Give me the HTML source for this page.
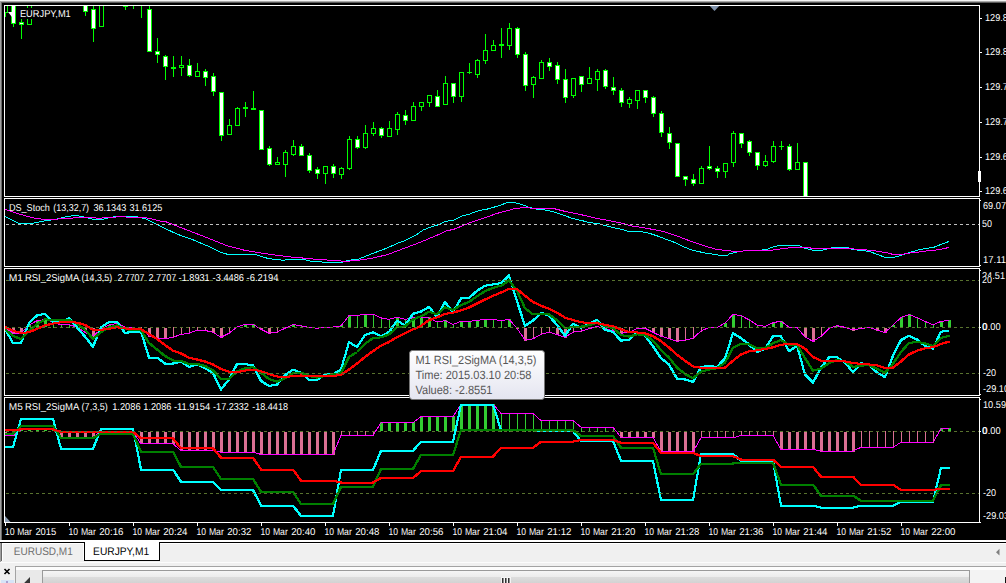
<!DOCTYPE html>
<html><head><meta charset="utf-8"><title>EURJPY,M1</title>
<style>
html,body{margin:0;padding:0;background:#000;overflow:hidden}
body{width:1006px;height:583px}
svg{display:block;font-family:"Liberation Sans",sans-serif}
text{white-space:pre;text-rendering:geometricPrecision}
</style></head><body>
<svg width="1006" height="583" viewBox="0 0 1006 583">
<rect x="0" y="0" width="1006" height="583" fill="#000"/>
<rect x="0" y="0" width="1006" height="1" fill="#f3f3f3"/>
<rect x="0" y="1" width="1006" height="1" fill="#a8a8a8"/>
<rect x="0" y="2" width="1006" height="1" fill="#5a5a5a"/>
<rect x="0" y="1" width="1" height="540" fill="#a0a0a0"/>
<rect x="1" y="2" width="1" height="538" fill="#696969"/>
<rect x="4" y="5" width="976" height="1" fill="#fff"/>
<rect x="4" y="5" width="1" height="192" fill="#fff"/>
<rect x="979" y="5" width="1" height="192" fill="#fff"/>
<rect x="4" y="196" width="976" height="1" fill="#fff"/>
<rect x="4" y="198" width="976" height="1" fill="#fff"/>
<rect x="4" y="198" width="1" height="69" fill="#fff"/>
<rect x="979" y="198" width="1" height="69" fill="#fff"/>
<rect x="4" y="266" width="976" height="1" fill="#fff"/>
<rect x="4" y="268" width="976" height="1" fill="#fff"/>
<rect x="4" y="268" width="1" height="128" fill="#fff"/>
<rect x="979" y="268" width="1" height="128" fill="#fff"/>
<rect x="4" y="395" width="976" height="1" fill="#fff"/>
<rect x="4" y="397" width="976" height="1" fill="#fff"/>
<rect x="4" y="397" width="1" height="126" fill="#fff"/>
<rect x="979" y="397" width="1" height="126" fill="#fff"/>
<rect x="4" y="522" width="977" height="1" fill="#fff"/>
<rect x="980" y="200" width="1" height="1" fill="#fff"/>
<rect x="980" y="270" width="1" height="1" fill="#fff"/>
<rect x="980" y="399" width="1" height="1" fill="#fff"/>
<rect x="980" y="265" width="1" height="1" fill="#fff"/>
<rect x="980" y="394" width="1" height="1" fill="#fff"/>
<g shape-rendering="crispEdges">
<rect x="7" y="6" width="1" height="7" fill="#00ff00"/>
<rect x="5" y="12" width="3" height="1" fill="#00ff00"/>
<rect x="5" y="12" width="1" height="5" fill="#00ff00"/>
<rect x="13" y="6" width="1" height="21" fill="#00ff00"/>
<rect x="11" y="6" width="5" height="18" fill="#00ff00"/>
<rect x="12" y="6" width="3" height="17" fill="#fff"/>
<rect x="21" y="19" width="1" height="20" fill="#00ff00"/>
<rect x="19" y="22" width="5" height="3" fill="#00ff00"/>
<rect x="20" y="23" width="3" height="1" fill="#fff"/>
<rect x="29" y="6" width="1" height="19" fill="#00ff00"/>
<rect x="27" y="6" width="5" height="19" fill="#00ff00"/>
<rect x="28" y="6" width="3" height="18" fill="#000"/>
<rect x="85" y="6" width="1" height="10" fill="#00ff00"/>
<rect x="83" y="6" width="5" height="6" fill="#00ff00"/>
<rect x="84" y="6" width="3" height="5" fill="#fff"/>
<rect x="93" y="6" width="1" height="36" fill="#00ff00"/>
<rect x="91" y="9" width="5" height="20" fill="#00ff00"/>
<rect x="92" y="10" width="3" height="18" fill="#fff"/>
<rect x="101" y="6" width="1" height="21" fill="#00ff00"/>
<rect x="99" y="6" width="5" height="21" fill="#00ff00"/>
<rect x="100" y="6" width="3" height="20" fill="#000"/>
<rect x="125" y="6" width="1" height="4" fill="#00ff00"/>
<rect x="123" y="6" width="5" height="1" fill="#00ff00"/>
<rect x="133" y="6" width="1" height="3" fill="#00ff00"/>
<rect x="141" y="6" width="1" height="12" fill="#00ff00"/>
<rect x="149" y="6" width="1" height="46" fill="#00ff00"/>
<rect x="147" y="9" width="5" height="43" fill="#00ff00"/>
<rect x="148" y="10" width="3" height="41" fill="#fff"/>
<rect x="157" y="38" width="1" height="25" fill="#00ff00"/>
<rect x="155" y="51" width="5" height="4" fill="#00ff00"/>
<rect x="156" y="52" width="3" height="2" fill="#fff"/>
<rect x="165" y="55" width="1" height="25" fill="#00ff00"/>
<rect x="163" y="56" width="5" height="11" fill="#00ff00"/>
<rect x="164" y="57" width="3" height="9" fill="#fff"/>
<rect x="173" y="56" width="1" height="21" fill="#00ff00"/>
<rect x="171" y="67" width="5" height="2" fill="#00ff00"/>
<rect x="181" y="56" width="1" height="20" fill="#00ff00"/>
<rect x="179" y="65" width="5" height="3" fill="#00ff00"/>
<rect x="180" y="66" width="3" height="1" fill="#000"/>
<rect x="189" y="59" width="1" height="18" fill="#00ff00"/>
<rect x="187" y="65" width="5" height="11" fill="#00ff00"/>
<rect x="188" y="66" width="3" height="9" fill="#fff"/>
<rect x="197" y="63" width="1" height="14" fill="#00ff00"/>
<rect x="195" y="71" width="5" height="6" fill="#00ff00"/>
<rect x="196" y="72" width="3" height="4" fill="#000"/>
<rect x="205" y="69" width="1" height="17" fill="#00ff00"/>
<rect x="203" y="71" width="5" height="7" fill="#00ff00"/>
<rect x="204" y="72" width="3" height="5" fill="#fff"/>
<rect x="213" y="73" width="1" height="23" fill="#00ff00"/>
<rect x="211" y="76" width="5" height="16" fill="#00ff00"/>
<rect x="212" y="77" width="3" height="14" fill="#fff"/>
<rect x="221" y="92" width="1" height="49" fill="#00ff00"/>
<rect x="219" y="92" width="5" height="44" fill="#00ff00"/>
<rect x="220" y="93" width="3" height="42" fill="#fff"/>
<rect x="229" y="119" width="1" height="16" fill="#00ff00"/>
<rect x="227" y="125" width="5" height="10" fill="#00ff00"/>
<rect x="228" y="126" width="3" height="8" fill="#000"/>
<rect x="237" y="107" width="1" height="19" fill="#00ff00"/>
<rect x="235" y="108" width="5" height="18" fill="#00ff00"/>
<rect x="236" y="109" width="3" height="16" fill="#000"/>
<rect x="245" y="102" width="1" height="15" fill="#00ff00"/>
<rect x="243" y="107" width="5" height="2" fill="#00ff00"/>
<rect x="253" y="91" width="1" height="19" fill="#00ff00"/>
<rect x="251" y="108" width="5" height="2" fill="#00ff00"/>
<rect x="261" y="110" width="1" height="40" fill="#00ff00"/>
<rect x="259" y="110" width="5" height="40" fill="#00ff00"/>
<rect x="260" y="111" width="3" height="38" fill="#fff"/>
<rect x="269" y="146" width="1" height="20" fill="#00ff00"/>
<rect x="267" y="148" width="5" height="17" fill="#00ff00"/>
<rect x="268" y="149" width="3" height="15" fill="#fff"/>
<rect x="277" y="157" width="1" height="8" fill="#00ff00"/>
<rect x="275" y="162" width="5" height="3" fill="#00ff00"/>
<rect x="276" y="163" width="3" height="1" fill="#000"/>
<rect x="285" y="150" width="1" height="27" fill="#00ff00"/>
<rect x="283" y="152" width="5" height="13" fill="#00ff00"/>
<rect x="284" y="153" width="3" height="11" fill="#000"/>
<rect x="293" y="140" width="1" height="16" fill="#00ff00"/>
<rect x="291" y="146" width="5" height="9" fill="#00ff00"/>
<rect x="292" y="147" width="3" height="7" fill="#000"/>
<rect x="301" y="144" width="1" height="12" fill="#00ff00"/>
<rect x="299" y="146" width="5" height="10" fill="#00ff00"/>
<rect x="300" y="147" width="3" height="8" fill="#fff"/>
<rect x="309" y="153" width="1" height="20" fill="#00ff00"/>
<rect x="307" y="155" width="5" height="16" fill="#00ff00"/>
<rect x="308" y="156" width="3" height="14" fill="#fff"/>
<rect x="317" y="167" width="1" height="12" fill="#00ff00"/>
<rect x="315" y="169" width="5" height="5" fill="#00ff00"/>
<rect x="316" y="170" width="3" height="3" fill="#fff"/>
<rect x="325" y="166" width="1" height="18" fill="#00ff00"/>
<rect x="323" y="166" width="5" height="8" fill="#00ff00"/>
<rect x="324" y="167" width="3" height="6" fill="#000"/>
<rect x="333" y="164" width="1" height="14" fill="#00ff00"/>
<rect x="331" y="166" width="5" height="8" fill="#00ff00"/>
<rect x="332" y="167" width="3" height="6" fill="#fff"/>
<rect x="341" y="167" width="1" height="12" fill="#00ff00"/>
<rect x="339" y="168" width="5" height="7" fill="#00ff00"/>
<rect x="340" y="169" width="3" height="5" fill="#000"/>
<rect x="349" y="136" width="1" height="34" fill="#00ff00"/>
<rect x="347" y="139" width="5" height="30" fill="#00ff00"/>
<rect x="348" y="140" width="3" height="28" fill="#000"/>
<rect x="357" y="136" width="1" height="13" fill="#00ff00"/>
<rect x="355" y="139" width="5" height="9" fill="#00ff00"/>
<rect x="356" y="140" width="3" height="7" fill="#fff"/>
<rect x="365" y="125" width="1" height="24" fill="#00ff00"/>
<rect x="363" y="133" width="5" height="15" fill="#00ff00"/>
<rect x="364" y="134" width="3" height="13" fill="#000"/>
<rect x="373" y="122" width="1" height="14" fill="#00ff00"/>
<rect x="371" y="128" width="5" height="6" fill="#00ff00"/>
<rect x="372" y="129" width="3" height="4" fill="#000"/>
<rect x="381" y="127" width="1" height="11" fill="#00ff00"/>
<rect x="379" y="128" width="5" height="8" fill="#00ff00"/>
<rect x="380" y="129" width="3" height="6" fill="#fff"/>
<rect x="389" y="121" width="1" height="16" fill="#00ff00"/>
<rect x="387" y="128" width="5" height="9" fill="#00ff00"/>
<rect x="388" y="129" width="3" height="7" fill="#000"/>
<rect x="397" y="112" width="1" height="23" fill="#00ff00"/>
<rect x="395" y="114" width="5" height="16" fill="#00ff00"/>
<rect x="396" y="115" width="3" height="14" fill="#000"/>
<rect x="405" y="110" width="1" height="15" fill="#00ff00"/>
<rect x="403" y="115" width="5" height="6" fill="#00ff00"/>
<rect x="404" y="116" width="3" height="4" fill="#fff"/>
<rect x="413" y="102" width="1" height="19" fill="#00ff00"/>
<rect x="411" y="106" width="5" height="15" fill="#00ff00"/>
<rect x="412" y="107" width="3" height="13" fill="#000"/>
<rect x="421" y="102" width="1" height="9" fill="#00ff00"/>
<rect x="419" y="102" width="5" height="5" fill="#00ff00"/>
<rect x="420" y="103" width="3" height="3" fill="#000"/>
<rect x="429" y="95" width="1" height="12" fill="#00ff00"/>
<rect x="427" y="95" width="5" height="8" fill="#00ff00"/>
<rect x="428" y="96" width="3" height="6" fill="#000"/>
<rect x="437" y="90" width="1" height="17" fill="#00ff00"/>
<rect x="435" y="96" width="5" height="11" fill="#00ff00"/>
<rect x="436" y="97" width="3" height="9" fill="#fff"/>
<rect x="445" y="76" width="1" height="29" fill="#00ff00"/>
<rect x="443" y="83" width="5" height="22" fill="#00ff00"/>
<rect x="444" y="84" width="3" height="20" fill="#000"/>
<rect x="453" y="83" width="1" height="20" fill="#00ff00"/>
<rect x="451" y="83" width="5" height="14" fill="#00ff00"/>
<rect x="452" y="84" width="3" height="12" fill="#fff"/>
<rect x="461" y="72" width="1" height="30" fill="#00ff00"/>
<rect x="459" y="72" width="5" height="25" fill="#00ff00"/>
<rect x="460" y="73" width="3" height="23" fill="#000"/>
<rect x="469" y="63" width="1" height="11" fill="#00ff00"/>
<rect x="467" y="72" width="5" height="1" fill="#00ff00"/>
<rect x="477" y="59" width="1" height="19" fill="#00ff00"/>
<rect x="475" y="60" width="5" height="15" fill="#00ff00"/>
<rect x="476" y="61" width="3" height="13" fill="#000"/>
<rect x="485" y="34" width="1" height="30" fill="#00ff00"/>
<rect x="483" y="50" width="5" height="11" fill="#00ff00"/>
<rect x="484" y="51" width="3" height="9" fill="#000"/>
<rect x="493" y="40" width="1" height="11" fill="#00ff00"/>
<rect x="491" y="45" width="5" height="6" fill="#00ff00"/>
<rect x="492" y="46" width="3" height="4" fill="#000"/>
<rect x="501" y="28" width="1" height="30" fill="#00ff00"/>
<rect x="499" y="44" width="5" height="2" fill="#00ff00"/>
<rect x="509" y="23" width="1" height="27" fill="#00ff00"/>
<rect x="507" y="28" width="5" height="18" fill="#00ff00"/>
<rect x="508" y="29" width="3" height="16" fill="#000"/>
<rect x="517" y="27" width="1" height="31" fill="#00ff00"/>
<rect x="515" y="28" width="5" height="27" fill="#00ff00"/>
<rect x="516" y="29" width="3" height="25" fill="#fff"/>
<rect x="525" y="52" width="1" height="39" fill="#00ff00"/>
<rect x="523" y="54" width="5" height="32" fill="#00ff00"/>
<rect x="524" y="55" width="3" height="30" fill="#fff"/>
<rect x="533" y="76" width="1" height="22" fill="#00ff00"/>
<rect x="531" y="77" width="5" height="8" fill="#00ff00"/>
<rect x="532" y="78" width="3" height="6" fill="#000"/>
<rect x="541" y="60" width="1" height="19" fill="#00ff00"/>
<rect x="539" y="62" width="5" height="17" fill="#00ff00"/>
<rect x="540" y="63" width="3" height="15" fill="#000"/>
<rect x="549" y="58" width="1" height="13" fill="#00ff00"/>
<rect x="547" y="62" width="5" height="5" fill="#00ff00"/>
<rect x="548" y="63" width="3" height="3" fill="#fff"/>
<rect x="557" y="62" width="1" height="22" fill="#00ff00"/>
<rect x="555" y="65" width="5" height="15" fill="#00ff00"/>
<rect x="556" y="66" width="3" height="13" fill="#fff"/>
<rect x="565" y="69" width="1" height="34" fill="#00ff00"/>
<rect x="563" y="79" width="5" height="19" fill="#00ff00"/>
<rect x="564" y="80" width="3" height="17" fill="#fff"/>
<rect x="573" y="78" width="1" height="20" fill="#00ff00"/>
<rect x="571" y="78" width="5" height="18" fill="#00ff00"/>
<rect x="572" y="79" width="3" height="16" fill="#000"/>
<rect x="581" y="76" width="1" height="16" fill="#00ff00"/>
<rect x="579" y="76" width="5" height="9" fill="#00ff00"/>
<rect x="580" y="77" width="3" height="7" fill="#fff"/>
<rect x="589" y="67" width="1" height="17" fill="#00ff00"/>
<rect x="587" y="78" width="5" height="6" fill="#00ff00"/>
<rect x="588" y="79" width="3" height="4" fill="#000"/>
<rect x="597" y="69" width="1" height="22" fill="#00ff00"/>
<rect x="595" y="71" width="5" height="9" fill="#00ff00"/>
<rect x="596" y="72" width="3" height="7" fill="#000"/>
<rect x="605" y="69" width="1" height="20" fill="#00ff00"/>
<rect x="603" y="70" width="5" height="17" fill="#00ff00"/>
<rect x="604" y="71" width="3" height="15" fill="#fff"/>
<rect x="613" y="77" width="1" height="18" fill="#00ff00"/>
<rect x="611" y="87" width="5" height="4" fill="#00ff00"/>
<rect x="612" y="88" width="3" height="2" fill="#fff"/>
<rect x="621" y="88" width="1" height="19" fill="#00ff00"/>
<rect x="619" y="90" width="5" height="13" fill="#00ff00"/>
<rect x="620" y="91" width="3" height="11" fill="#fff"/>
<rect x="629" y="97" width="1" height="11" fill="#00ff00"/>
<rect x="627" y="99" width="5" height="5" fill="#00ff00"/>
<rect x="628" y="100" width="3" height="3" fill="#000"/>
<rect x="637" y="90" width="1" height="19" fill="#00ff00"/>
<rect x="635" y="90" width="5" height="11" fill="#00ff00"/>
<rect x="636" y="91" width="3" height="9" fill="#000"/>
<rect x="645" y="90" width="1" height="13" fill="#00ff00"/>
<rect x="643" y="90" width="5" height="8" fill="#00ff00"/>
<rect x="644" y="91" width="3" height="6" fill="#fff"/>
<rect x="653" y="96" width="1" height="21" fill="#00ff00"/>
<rect x="651" y="97" width="5" height="17" fill="#00ff00"/>
<rect x="652" y="98" width="3" height="15" fill="#fff"/>
<rect x="661" y="111" width="1" height="26" fill="#00ff00"/>
<rect x="659" y="113" width="5" height="20" fill="#00ff00"/>
<rect x="660" y="114" width="3" height="18" fill="#fff"/>
<rect x="669" y="127" width="1" height="22" fill="#00ff00"/>
<rect x="667" y="133" width="5" height="10" fill="#00ff00"/>
<rect x="668" y="134" width="3" height="8" fill="#fff"/>
<rect x="677" y="143" width="1" height="34" fill="#00ff00"/>
<rect x="675" y="143" width="5" height="34" fill="#00ff00"/>
<rect x="676" y="144" width="3" height="32" fill="#fff"/>
<rect x="685" y="176" width="1" height="10" fill="#00ff00"/>
<rect x="683" y="176" width="5" height="4" fill="#00ff00"/>
<rect x="684" y="177" width="3" height="2" fill="#fff"/>
<rect x="693" y="174" width="1" height="12" fill="#00ff00"/>
<rect x="691" y="179" width="5" height="5" fill="#00ff00"/>
<rect x="692" y="180" width="3" height="3" fill="#fff"/>
<rect x="701" y="166" width="1" height="18" fill="#00ff00"/>
<rect x="699" y="168" width="5" height="16" fill="#00ff00"/>
<rect x="700" y="169" width="3" height="14" fill="#000"/>
<rect x="709" y="146" width="1" height="24" fill="#00ff00"/>
<rect x="707" y="166" width="5" height="3" fill="#00ff00"/>
<rect x="708" y="167" width="3" height="1" fill="#fff"/>
<rect x="717" y="166" width="1" height="12" fill="#00ff00"/>
<rect x="715" y="168" width="5" height="4" fill="#00ff00"/>
<rect x="716" y="169" width="3" height="2" fill="#fff"/>
<rect x="725" y="163" width="1" height="15" fill="#00ff00"/>
<rect x="723" y="163" width="5" height="9" fill="#00ff00"/>
<rect x="724" y="164" width="3" height="7" fill="#000"/>
<rect x="733" y="131" width="1" height="36" fill="#00ff00"/>
<rect x="731" y="133" width="5" height="30" fill="#00ff00"/>
<rect x="732" y="134" width="3" height="28" fill="#000"/>
<rect x="741" y="133" width="1" height="15" fill="#00ff00"/>
<rect x="739" y="133" width="5" height="11" fill="#00ff00"/>
<rect x="740" y="134" width="3" height="9" fill="#fff"/>
<rect x="749" y="140" width="1" height="16" fill="#00ff00"/>
<rect x="747" y="141" width="5" height="12" fill="#00ff00"/>
<rect x="748" y="142" width="3" height="10" fill="#fff"/>
<rect x="757" y="152" width="1" height="18" fill="#00ff00"/>
<rect x="755" y="152" width="5" height="14" fill="#00ff00"/>
<rect x="756" y="153" width="3" height="12" fill="#fff"/>
<rect x="765" y="155" width="1" height="12" fill="#00ff00"/>
<rect x="763" y="161" width="5" height="5" fill="#00ff00"/>
<rect x="764" y="162" width="3" height="3" fill="#000"/>
<rect x="773" y="141" width="1" height="22" fill="#00ff00"/>
<rect x="771" y="146" width="5" height="16" fill="#00ff00"/>
<rect x="772" y="147" width="3" height="14" fill="#000"/>
<rect x="781" y="141" width="1" height="9" fill="#00ff00"/>
<rect x="779" y="146" width="5" height="1" fill="#00ff00"/>
<rect x="789" y="144" width="1" height="27" fill="#00ff00"/>
<rect x="787" y="146" width="5" height="24" fill="#00ff00"/>
<rect x="788" y="147" width="3" height="22" fill="#fff"/>
<rect x="797" y="143" width="1" height="27" fill="#00ff00"/>
<rect x="795" y="162" width="5" height="8" fill="#00ff00"/>
<rect x="796" y="163" width="3" height="6" fill="#000"/>
<rect x="805" y="162" width="1" height="34" fill="#00ff00"/>
<rect x="803" y="162" width="5" height="34" fill="#00ff00"/>
<rect x="804" y="163" width="3" height="33" fill="#fff"/>
</g>
<rect x="18" y="8" width="55" height="11" fill="#000"/>
<path d="M8 12H12V17Z" fill="#fff"/>
<text y="17" font-size="10" fill="#fff"><tspan x="19.9" textLength="50.9" lengthAdjust="spacingAndGlyphs">EURJPY,M1</tspan></text>
<path d="M709.8 6H719.2L714.5 11Z" fill="#8092ab"/>
<path d="M5 516L10.5 522H5Z" fill="#8a9bb0"/>
<rect x="978" y="171" width="3" height="11" fill="#fff"/>
<rect x="980" y="18" width="2" height="1" fill="#fff"/>
<text x="985" y="21" font-size="10" fill="#fff" textLength="33" lengthAdjust="spacingAndGlyphs">129.850</text>
<rect x="980" y="52" width="2" height="1" fill="#fff"/>
<text x="985" y="55" font-size="10" fill="#fff" textLength="33" lengthAdjust="spacingAndGlyphs">129.800</text>
<rect x="980" y="87" width="2" height="1" fill="#fff"/>
<text x="985" y="90" font-size="10" fill="#fff" textLength="33" lengthAdjust="spacingAndGlyphs">129.750</text>
<rect x="980" y="122" width="2" height="1" fill="#fff"/>
<text x="985" y="125" font-size="10" fill="#fff" textLength="33" lengthAdjust="spacingAndGlyphs">129.700</text>
<rect x="980" y="157" width="2" height="1" fill="#fff"/>
<text x="985" y="160" font-size="10" fill="#fff" textLength="33" lengthAdjust="spacingAndGlyphs">129.650</text>
<rect x="980" y="191" width="2" height="1" fill="#fff"/>
<text x="985" y="194" font-size="10" fill="#fff" textLength="33" lengthAdjust="spacingAndGlyphs">129.600</text>
<defs><clipPath id="cp"><rect x="5" y="0" width="974" height="583"/></clipPath></defs>
<g shape-rendering="crispEdges" clip-path="url(#cp)">
<polyline points="5.0,216.4 13.0,220.5 20.0,223.8 31.0,223.8 36.0,222.5 44.0,221.0 52.0,219.8 58.0,218.8 66.0,216.8 73.0,215.6 76.8,215.5 83.5,216.9 93.5,219.4 102.0,219.4 113.5,216.9 137.0,216.9 145.0,218.5 157.0,224.4 160.0,226.0 176.7,234.0 193.4,240.0 210.0,247.0 221.8,252.8 228.5,254.5 255.0,254.5 268.5,258.6 283.6,260.3 290.0,259.1 302.0,259.1 310.0,261.1 320.0,261.6 323.0,262.3 341.7,262.3 348.4,260.3 358.4,259.1 370.0,254.5 386.8,248.1 396.8,243.6 406.8,239.8 415.0,235.6 423.5,229.9 432.0,226.6 438.6,224.7 445.0,221.4 453.6,220.2 462.0,216.0 470.0,213.9 478.6,210.7 488.0,208.9 496.7,206.4 508.4,202.3 513.4,202.3 521.7,204.4 530.0,207.7 538.5,209.4 546.8,210.2 555.0,212.2 563.5,215.2 571.8,218.2 583.5,221.0 590.0,222.7 598.6,223.6 605.0,225.6 613.6,227.7 622.0,229.4 628.6,231.4 640.0,231.5 648.4,233.0 656.7,235.7 665.0,238.9 673.4,241.9 681.8,246.0 690.0,249.4 698.5,251.6 706.8,253.3 715.0,254.5 721.8,255.6 726.8,255.6 730.0,253.6 737.0,252.0 745.0,250.6 757.0,250.6 767.0,249.4 772.0,247.3 780.0,245.3 785.3,245.6 792.0,246.0 795.3,245.3 798.6,245.3 803.6,247.8 806.7,248.6 813.4,250.3 821.7,250.3 826.7,249.1 833.4,247.4 847.6,247.4 851.8,249.4 865.0,250.8 870.0,251.6 875.0,253.6 880.0,255.3 885.0,257.5 893.5,257.5 900.0,255.6 908.6,252.8 917.0,250.3 925.3,248.6 933.6,247.4 938.6,245.3 943.6,243.6 949.0,241.4" stroke="#00ffff" stroke-width="1" fill="none" stroke-linejoin="round"/>
<polyline points="5.0,209.4 13.0,212.0 21.0,214.5 29.0,216.8 37.0,218.7 45.0,219.3 57.0,219.3 60.0,218.5 70.0,218.2 83.5,217.4 100.0,218.2 117.0,216.9 142.0,217.2 150.0,218.5 160.0,221.0 165.0,221.4 176.7,226.0 193.4,232.4 210.0,238.9 226.8,245.6 243.5,250.0 260.0,252.8 277.0,255.3 293.6,257.3 310.0,258.6 320.0,259.8 336.7,260.3 343.4,261.5 358.4,260.3 370.0,258.6 386.8,254.8 403.5,248.6 420.0,242.4 437.0,235.2 447.0,230.7 453.6,229.4 470.0,222.7 480.0,219.4 496.7,213.5 513.4,209.0 523.4,207.4 530.0,208.0 538.5,208.5 553.5,208.5 563.5,211.0 580.0,214.4 597.0,218.5 613.6,221.4 623.6,223.6 630.0,225.7 640.0,227.2 648.4,228.6 656.7,230.2 665.0,231.9 673.4,234.7 681.8,237.8 690.0,241.0 698.5,243.9 706.8,246.6 715.0,249.0 723.5,250.3 731.9,251.1 767.0,250.8 777.0,249.4 785.3,248.3 793.6,247.3 800.0,247.0 808.4,247.8 816.7,248.6 850.0,248.6 858.5,249.4 871.8,250.3 880.0,251.6 886.8,252.8 893.5,254.5 901.9,254.5 908.6,253.1 917.0,252.3 925.3,251.1 933.6,250.3 942.0,249.1 949.0,247.4" stroke="#ff00ff" stroke-width="1" fill="none" stroke-linejoin="round"/>
<path d="M5 224.5H979" stroke="#c0c0c0" stroke-width="1" stroke-dasharray="3 3" stroke-dashoffset="5" fill="none"/>
</g>
<text y="211" font-size="10" fill="#fff"><tspan x="8.9" textLength="41.0" lengthAdjust="spacingAndGlyphs">DS_Stoch</tspan> <tspan x="53.3" textLength="35.8" lengthAdjust="spacingAndGlyphs">(13,32,7)</tspan> <tspan x="93.4" textLength="32.9" lengthAdjust="spacingAndGlyphs">36.1343</tspan> <tspan x="129.4" textLength="32.9" lengthAdjust="spacingAndGlyphs">31.6125</tspan></text>
<text x="983" y="209" font-size="10" fill="#fff" textLength="23" lengthAdjust="spacingAndGlyphs">69.07</text>
<text x="982" y="227" font-size="10" fill="#fff" textLength="10" lengthAdjust="spacingAndGlyphs">50</text>
<text x="983" y="263" font-size="10" fill="#fff" textLength="23" lengthAdjust="spacingAndGlyphs">17.11</text>
<g shape-rendering="crispEdges" clip-path="url(#cp)">
<rect x="12" y="328" width="3" height="6" fill="#db7093"/>
<rect x="20" y="328" width="3" height="6" fill="#db7093"/>
<rect x="28" y="325" width="3" height="2" fill="#32cd32"/>
<rect x="36" y="320" width="3" height="7" fill="#32cd32"/>
<rect x="44" y="319" width="3" height="8" fill="#32cd32"/>
<rect x="53" y="322" width="1" height="6" fill="#32cd32"/>
<rect x="61" y="325" width="1" height="3" fill="#32cd32"/>
<rect x="69" y="324" width="1" height="4" fill="#32cd32"/>
<rect x="84" y="328" width="3" height="5" fill="#db7093"/>
<rect x="92" y="328" width="3" height="9" fill="#db7093"/>
<rect x="101" y="327" width="1" height="3" fill="#db7093"/>
<rect x="108" y="325" width="3" height="2" fill="#32cd32"/>
<rect x="116" y="323" width="3" height="4" fill="#32cd32"/>
<rect x="132" y="328" width="3" height="1" fill="#db7093"/>
<rect x="141" y="327" width="1" height="2" fill="#db7093"/>
<rect x="148" y="328" width="3" height="9" fill="#db7093"/>
<rect x="156" y="328" width="3" height="11" fill="#db7093"/>
<rect x="164" y="328" width="3" height="11" fill="#db7093"/>
<rect x="173" y="327" width="1" height="11" fill="#db7093"/>
<rect x="181" y="327" width="1" height="8" fill="#db7093"/>
<rect x="189" y="327" width="1" height="7" fill="#db7093"/>
<rect x="197" y="327" width="1" height="4" fill="#db7093"/>
<rect x="205" y="327" width="1" height="4" fill="#db7093"/>
<rect x="212" y="328" width="3" height="5" fill="#db7093"/>
<rect x="220" y="328" width="3" height="10" fill="#db7093"/>
<rect x="229" y="327" width="1" height="7" fill="#db7093"/>
<rect x="244" y="324" width="3" height="3" fill="#32cd32"/>
<rect x="252" y="324" width="3" height="3" fill="#32cd32"/>
<rect x="260" y="328" width="3" height="2" fill="#db7093"/>
<rect x="268" y="328" width="3" height="6" fill="#db7093"/>
<rect x="277" y="327" width="1" height="6" fill="#db7093"/>
<rect x="285" y="327" width="1" height="2" fill="#db7093"/>
<rect x="292" y="324" width="3" height="3" fill="#32cd32"/>
<rect x="301" y="325" width="1" height="3" fill="#32cd32"/>
<rect x="316" y="328" width="3" height="1" fill="#db7093"/>
<rect x="340" y="325" width="3" height="2" fill="#32cd32"/>
<rect x="348" y="315" width="3" height="12" fill="#32cd32"/>
<rect x="357" y="315" width="1" height="13" fill="#32cd32"/>
<rect x="364" y="314" width="3" height="13" fill="#32cd32"/>
<rect x="373" y="314" width="1" height="14" fill="#32cd32"/>
<rect x="381" y="317" width="1" height="11" fill="#32cd32"/>
<rect x="389" y="319" width="1" height="9" fill="#32cd32"/>
<rect x="396" y="317" width="3" height="10" fill="#32cd32"/>
<rect x="405" y="319" width="1" height="9" fill="#32cd32"/>
<rect x="412" y="317" width="3" height="10" fill="#32cd32"/>
<rect x="420" y="317" width="3" height="10" fill="#32cd32"/>
<rect x="428" y="317" width="3" height="10" fill="#32cd32"/>
<rect x="437" y="321" width="1" height="7" fill="#32cd32"/>
<rect x="444" y="320" width="3" height="7" fill="#32cd32"/>
<rect x="453" y="324" width="1" height="4" fill="#32cd32"/>
<rect x="460" y="321" width="3" height="6" fill="#32cd32"/>
<rect x="468" y="321" width="3" height="6" fill="#32cd32"/>
<rect x="476" y="320" width="3" height="7" fill="#32cd32"/>
<rect x="484" y="319" width="3" height="8" fill="#32cd32"/>
<rect x="493" y="319" width="1" height="9" fill="#32cd32"/>
<rect x="501" y="320" width="1" height="8" fill="#32cd32"/>
<rect x="508" y="319" width="3" height="8" fill="#32cd32"/>
<rect x="516" y="328" width="3" height="1" fill="#db7093"/>
<rect x="524" y="328" width="3" height="13" fill="#db7093"/>
<rect x="533" y="327" width="1" height="12" fill="#db7093"/>
<rect x="541" y="327" width="1" height="8" fill="#db7093"/>
<rect x="549" y="327" width="1" height="6" fill="#db7093"/>
<rect x="556" y="328" width="3" height="7" fill="#db7093"/>
<rect x="564" y="328" width="3" height="10" fill="#db7093"/>
<rect x="573" y="327" width="1" height="6" fill="#db7093"/>
<rect x="581" y="327" width="1" height="5" fill="#db7093"/>
<rect x="589" y="327" width="1" height="2" fill="#db7093"/>
<rect x="596" y="326" width="3" height="1" fill="#32cd32"/>
<rect x="604" y="328" width="3" height="1" fill="#db7093"/>
<rect x="612" y="328" width="3" height="3" fill="#db7093"/>
<rect x="620" y="328" width="3" height="6" fill="#db7093"/>
<rect x="629" y="327" width="1" height="6" fill="#db7093"/>
<rect x="637" y="327" width="1" height="2" fill="#db7093"/>
<rect x="645" y="327" width="1" height="2" fill="#db7093"/>
<rect x="652" y="328" width="3" height="5" fill="#db7093"/>
<rect x="660" y="328" width="3" height="9" fill="#db7093"/>
<rect x="668" y="328" width="3" height="11" fill="#db7093"/>
<rect x="676" y="328" width="3" height="14" fill="#db7093"/>
<rect x="685" y="327" width="1" height="14" fill="#db7093"/>
<rect x="693" y="327" width="1" height="12" fill="#db7093"/>
<rect x="701" y="327" width="1" height="5" fill="#db7093"/>
<rect x="724" y="323" width="3" height="4" fill="#32cd32"/>
<rect x="732" y="314" width="3" height="13" fill="#32cd32"/>
<rect x="741" y="315" width="1" height="13" fill="#32cd32"/>
<rect x="749" y="319" width="1" height="9" fill="#32cd32"/>
<rect x="757" y="325" width="1" height="3" fill="#32cd32"/>
<rect x="765" y="326" width="1" height="2" fill="#32cd32"/>
<rect x="772" y="322" width="3" height="5" fill="#32cd32"/>
<rect x="780" y="321" width="3" height="6" fill="#32cd32"/>
<rect x="804" y="328" width="3" height="9" fill="#db7093"/>
<rect x="812" y="328" width="3" height="14" fill="#db7093"/>
<rect x="821" y="327" width="1" height="10" fill="#db7093"/>
<rect x="829" y="327" width="1" height="2" fill="#db7093"/>
<rect x="836" y="325" width="3" height="2" fill="#32cd32"/>
<rect x="852" y="328" width="3" height="3" fill="#db7093"/>
<rect x="861" y="327" width="1" height="2" fill="#db7093"/>
<rect x="876" y="328" width="3" height="3" fill="#db7093"/>
<rect x="884" y="328" width="3" height="5" fill="#db7093"/>
<rect x="892" y="325" width="3" height="2" fill="#32cd32"/>
<rect x="900" y="317" width="3" height="10" fill="#32cd32"/>
<rect x="908" y="314" width="3" height="13" fill="#32cd32"/>
<rect x="917" y="317" width="1" height="11" fill="#32cd32"/>
<rect x="925" y="321" width="1" height="7" fill="#32cd32"/>
<rect x="933" y="325" width="1" height="3" fill="#32cd32"/>
<rect x="940" y="321" width="3" height="6" fill="#32cd32"/>
<rect x="948" y="320" width="3" height="7" fill="#32cd32"/>
<polyline points="5.0,327.5 13.0,333.0 21.0,333.4 29.0,325.0 37.0,320.7 45.0,319.5 53.0,322.0 61.0,325.0 69.0,324.7 77.0,327.0 85.0,332.3 93.0,336.0 101.0,329.2 109.0,325.0 117.0,323.5 125.0,327.0 133.0,328.0 141.0,328.3 149.0,336.3 157.0,338.2 165.0,338.6 173.0,337.3 181.0,334.4 189.0,333.2 197.0,330.4 205.0,330.4 213.0,332.3 221.0,337.3 229.0,333.3 237.0,327.0 245.0,324.3 253.0,324.3 261.0,329.3 269.0,333.3 277.0,332.0 285.0,328.3 293.0,324.5 301.0,325.8 309.0,327.3 317.0,328.3 325.0,327.0 333.0,327.0 341.0,325.8 349.0,315.6 357.0,315.6 365.0,314.1 373.0,314.1 381.0,317.9 389.0,319.4 397.0,317.1 405.0,319.4 413.0,317.9 421.0,317.9 429.0,317.9 437.0,321.9 445.0,320.7 453.0,324.4 461.0,321.4 469.0,321.4 477.0,320.5 485.0,319.2 493.0,319.2 501.0,320.7 509.0,319.2 517.0,328.2 525.0,340.1 533.0,338.9 541.0,334.3 549.0,332.2 557.0,334.5 565.0,337.3 573.0,332.2 581.0,331.0 589.0,328.8 597.0,326.3 605.0,328.8 613.0,330.7 621.0,333.2 629.0,332.5 637.0,328.5 645.0,328.2 653.0,332.3 661.0,336.1 669.0,338.6 677.0,341.3 685.0,340.1 693.0,338.2 701.0,331.0 709.0,327.5 717.0,327.5 725.0,323.1 733.0,314.4 741.0,315.6 749.0,319.8 757.0,325.0 765.0,326.3 773.0,322.8 781.0,321.0 789.0,327.3 797.0,327.5 805.0,336.9 813.0,341.3 821.0,336.3 829.0,328.5 837.0,325.7 845.0,327.3 853.0,330.0 861.0,328.5 869.0,327.5 877.0,330.0 885.0,332.5 893.0,325.0 901.0,317.5 909.0,314.6 917.0,317.6 925.0,321.3 933.0,325.0 941.0,321.3 949.0,320.4" stroke="#ff00ff" stroke-width="1" fill="none" stroke-linejoin="round"/>
<g stroke="#00ffff" stroke-width="1" fill="none"><polyline id="l1" points="5.0,328.8 13.0,343.0 21.0,343.0 29.0,323.0 37.0,315.4 45.0,313.9 53.0,321.7 61.0,321.7 69.0,318.3 77.0,327.3 85.0,336.7 93.0,346.7 101.0,327.3 109.0,322.0 117.0,322.0 125.0,333.0 133.0,331.7 141.0,331.7 149.0,357.6 157.0,357.6 165.0,363.5 173.0,363.5 181.0,361.5 189.0,367.0 197.0,364.5 205.0,368.0 213.0,373.0 221.0,389.3 229.0,379.6 237.0,364.0 245.0,364.2 253.0,365.2 261.0,380.9 269.0,385.9 277.0,384.6 285.0,375.2 293.0,369.6 301.0,372.7 309.0,379.9 317.0,379.9 325.0,374.4 333.0,374.4 341.0,369.5 349.0,342.2 357.0,347.0 365.0,335.0 373.0,332.3 381.0,336.3 389.0,332.0 397.0,320.7 405.0,325.3 413.0,313.8 421.0,311.5 429.0,306.9 437.0,316.9 445.0,301.9 453.0,312.5 461.0,298.5 469.0,297.9 477.0,290.8 485.0,285.7 493.0,284.4 501.0,283.2 509.0,275.6 517.0,301.3 525.0,325.7 533.0,320.7 541.0,312.8 549.0,315.7 557.0,325.1 565.0,335.8 573.0,323.9 581.0,327.8 589.0,323.8 597.0,319.8 605.0,330.0 613.0,331.9 621.0,340.7 629.0,339.8 637.0,332.3 645.0,335.7 653.0,346.3 661.0,358.2 669.0,364.5 677.0,378.6 685.0,379.5 693.0,382.0 701.0,367.3 709.0,365.7 717.0,367.0 725.0,358.2 733.0,333.2 741.0,338.2 749.0,344.4 757.0,352.0 765.0,348.8 773.0,336.3 781.0,336.3 789.0,351.3 797.0,345.7 805.0,374.5 813.0,382.6 821.0,367.6 829.0,357.3 837.0,357.3 845.0,362.6 853.0,372.2 861.0,363.2 869.0,365.1 877.0,372.6 885.0,377.0 893.0,355.7 901.0,340.0 909.0,335.9 917.0,339.5 925.0,345.8 933.0,348.8 941.0,331.6 949.0,331.0" transform="translate(-0.5 -0.5)"/><use href="#l1" x="1" y="0"/><use href="#l1" x="0" y="1"/><use href="#l1" x="1" y="1"/></g>
<g stroke="#008000" stroke-width="1" fill="none"><polyline id="l2" points="5.0,329.2 13.0,336.0 21.0,339.0 29.0,331.0 37.0,324.2 45.0,319.4 53.0,319.8 61.0,319.8 69.0,319.8 77.0,323.8 85.0,329.8 93.0,338.6 101.0,332.3 109.0,327.3 117.0,325.4 125.0,328.6 133.0,330.4 141.0,330.4 149.0,343.0 157.0,349.5 165.0,356.0 173.0,360.5 181.0,361.0 189.0,364.0 197.0,364.0 205.0,366.0 213.0,370.5 221.0,379.0 229.0,379.0 237.0,371.5 245.0,368.3 253.0,367.1 261.0,372.7 269.0,379.0 277.0,381.5 285.0,378.4 293.0,373.4 301.0,372.7 309.0,375.9 317.0,377.7 325.0,375.9 333.0,374.6 341.0,373.0 349.0,357.0 357.0,352.0 365.0,343.8 373.0,338.2 381.0,337.3 389.0,334.4 397.0,327.3 405.0,326.3 413.0,319.4 421.0,316.2 429.0,311.9 437.0,314.2 445.0,307.5 453.0,309.9 461.0,305.1 469.0,301.9 477.0,296.3 485.0,291.2 493.0,287.8 501.0,285.7 509.0,280.6 517.0,290.7 525.0,308.2 533.0,314.5 541.0,313.8 549.0,314.5 557.0,320.1 565.0,328.2 573.0,327.0 581.0,326.6 589.0,325.3 597.0,322.5 605.0,326.3 613.0,328.2 621.0,335.0 629.0,336.6 637.0,334.4 645.0,335.0 653.0,340.7 661.0,350.0 669.0,357.6 677.0,367.6 685.0,373.9 693.0,378.3 701.0,371.7 709.0,369.5 717.0,368.2 725.0,362.6 733.0,347.6 741.0,344.0 749.0,344.4 757.0,348.2 765.0,348.2 773.0,343.2 781.0,340.0 789.0,345.0 797.0,345.0 805.0,358.2 813.0,370.7 821.0,368.5 829.0,363.2 837.0,360.1 845.0,361.4 853.0,367.0 861.0,365.7 869.0,365.1 877.0,368.9 885.0,372.6 893.0,363.9 901.0,352.0 909.0,343.0 917.0,341.8 925.0,343.5 933.0,346.0 941.0,338.0 949.0,335.8" transform="translate(-0.5 -0.5)"/><use href="#l2" x="1" y="0"/><use href="#l2" x="0" y="1"/><use href="#l2" x="1" y="1"/></g>
<g stroke="#ff0000" stroke-width="1" fill="none"><polyline id="l3" points="5.0,327.0 13.0,330.8 21.0,333.0 29.0,332.3 37.0,328.8 45.0,325.4 53.0,323.6 61.0,322.3 69.0,322.0 77.0,322.6 85.0,325.0 93.0,329.6 101.0,329.8 109.0,328.8 117.0,327.3 125.0,328.3 133.0,329.4 141.0,329.4 149.0,334.0 157.0,339.0 165.0,345.0 173.0,350.7 181.0,353.5 189.0,357.6 197.0,359.5 205.0,361.5 213.0,364.5 221.0,369.0 229.0,371.7 237.0,372.1 245.0,370.6 253.0,369.6 261.0,371.2 269.0,374.0 277.0,376.5 285.0,376.9 293.0,376.2 301.0,375.5 309.0,375.9 317.0,376.5 325.0,376.2 333.0,375.9 341.0,375.0 349.0,369.5 357.0,363.6 365.0,357.0 373.0,351.1 381.0,345.7 389.0,342.0 397.0,337.2 405.0,333.2 413.0,329.4 421.0,325.8 429.0,320.2 437.0,317.4 445.0,313.8 453.0,312.7 461.0,310.3 469.0,307.5 477.0,303.5 485.0,299.5 493.0,295.9 501.0,292.5 509.0,289.0 517.0,289.0 525.0,295.7 533.0,302.0 541.0,305.7 549.0,308.8 557.0,312.6 565.0,317.6 573.0,320.1 581.0,322.2 589.0,323.2 597.0,323.2 605.0,324.8 613.0,326.3 621.0,329.4 629.0,331.9 637.0,332.5 645.0,333.2 653.0,336.3 661.0,341.1 669.0,347.6 677.0,354.8 685.0,360.7 693.0,366.4 701.0,367.8 709.0,367.9 717.0,367.9 725.0,367.6 733.0,360.7 741.0,354.5 749.0,351.3 757.0,350.3 765.0,349.0 773.0,347.3 781.0,344.8 789.0,344.0 797.0,344.0 805.0,348.6 813.0,357.0 821.0,360.7 829.0,361.0 837.0,361.0 845.0,361.4 853.0,362.9 861.0,363.9 869.0,364.5 877.0,365.4 885.0,367.9 893.0,367.6 901.0,361.4 909.0,354.4 917.0,350.7 925.0,348.3 933.0,347.1 941.0,344.0 949.0,341.6" transform="translate(-0.5 -0.5)"/><use href="#l3" x="1" y="0"/><use href="#l3" x="0" y="1"/><use href="#l3" x="1" y="1"/></g>
<path d="M5 280.5H979" stroke="#58722e" stroke-width="1" stroke-dasharray="3 3" stroke-dashoffset="5" fill="none"/>
<path d="M5 327.5H979" stroke="#58722e" stroke-width="1" stroke-dasharray="3 3" stroke-dashoffset="5" fill="none"/>
<path d="M5 373.5H979" stroke="#58722e" stroke-width="1" stroke-dasharray="3 3" stroke-dashoffset="5" fill="none"/>
</g>
<text y="281" font-size="10" fill="#fff"><tspan x="8.8" textLength="14.3" lengthAdjust="spacingAndGlyphs">M1</tspan> <tspan x="24.9" textLength="53.8" lengthAdjust="spacingAndGlyphs">RSI_2SigMA</tspan> <tspan x="81.6" textLength="30.6" lengthAdjust="spacingAndGlyphs">(14,3,5)</tspan> <tspan x="117.4" textLength="27.0" lengthAdjust="spacingAndGlyphs">2.7707</tspan> <tspan x="148.6" textLength="27.6" lengthAdjust="spacingAndGlyphs">2.7707</tspan> <tspan x="178.6" textLength="31.1" lengthAdjust="spacingAndGlyphs">-1.8931</tspan> <tspan x="212.6" textLength="31.4" lengthAdjust="spacingAndGlyphs">-3.4486</tspan> <tspan x="246.6" textLength="31.8" lengthAdjust="spacingAndGlyphs">-6.2194</tspan></text>
<text x="982" y="279" font-size="10" fill="#fff" textLength="23" lengthAdjust="spacingAndGlyphs">24.51</text>
<rect x="982" y="276" width="11" height="8" fill="#000"/>
<text x="982" y="283" font-size="10" fill="#fff" textLength="10" lengthAdjust="spacingAndGlyphs">20</text>
<text x="982" y="330" font-size="10" fill="#fff" textLength="5" lengthAdjust="spacingAndGlyphs">0</text>
<text x="982.6" y="330" font-size="10" fill="#fff" textLength="18" lengthAdjust="spacingAndGlyphs">0.00</text>
<text x="983" y="376" font-size="10" fill="#fff" textLength="13" lengthAdjust="spacingAndGlyphs">-20</text>
<text x="983" y="392" font-size="10" fill="#fff" textLength="26" lengthAdjust="spacingAndGlyphs">-29.10</text>
<rect x="980" y="327" width="1" height="1" fill="#fff"/>
<g shape-rendering="crispEdges" clip-path="url(#cp)">
<rect x="4" y="432" width="3" height="4" fill="#db7093"/>
<rect x="12" y="432" width="3" height="4" fill="#db7093"/>
<rect x="20" y="429" width="3" height="2" fill="#32cd32"/>
<rect x="28" y="429" width="3" height="2" fill="#32cd32"/>
<rect x="36" y="429" width="3" height="2" fill="#32cd32"/>
<rect x="44" y="429" width="3" height="2" fill="#32cd32"/>
<rect x="52" y="429" width="3" height="2" fill="#32cd32"/>
<rect x="60" y="432" width="3" height="6" fill="#db7093"/>
<rect x="68" y="432" width="3" height="6" fill="#db7093"/>
<rect x="76" y="432" width="3" height="6" fill="#db7093"/>
<rect x="84" y="432" width="3" height="6" fill="#db7093"/>
<rect x="92" y="432" width="3" height="6" fill="#db7093"/>
<rect x="140" y="432" width="3" height="12" fill="#db7093"/>
<rect x="148" y="432" width="3" height="12" fill="#db7093"/>
<rect x="156" y="432" width="3" height="12" fill="#db7093"/>
<rect x="164" y="432" width="3" height="12" fill="#db7093"/>
<rect x="172" y="432" width="3" height="12" fill="#db7093"/>
<rect x="180" y="432" width="3" height="19" fill="#db7093"/>
<rect x="188" y="432" width="3" height="19" fill="#db7093"/>
<rect x="196" y="432" width="3" height="19" fill="#db7093"/>
<rect x="204" y="432" width="3" height="19" fill="#db7093"/>
<rect x="212" y="432" width="3" height="19" fill="#db7093"/>
<rect x="220" y="432" width="3" height="21" fill="#db7093"/>
<rect x="228" y="432" width="3" height="21" fill="#db7093"/>
<rect x="236" y="432" width="3" height="21" fill="#db7093"/>
<rect x="244" y="432" width="3" height="21" fill="#db7093"/>
<rect x="252" y="432" width="3" height="21" fill="#db7093"/>
<rect x="260" y="432" width="3" height="23" fill="#db7093"/>
<rect x="268" y="432" width="3" height="23" fill="#db7093"/>
<rect x="276" y="432" width="3" height="23" fill="#db7093"/>
<rect x="284" y="432" width="3" height="23" fill="#db7093"/>
<rect x="292" y="432" width="3" height="23" fill="#db7093"/>
<rect x="300" y="432" width="3" height="23" fill="#db7093"/>
<rect x="308" y="432" width="3" height="23" fill="#db7093"/>
<rect x="316" y="432" width="3" height="23" fill="#db7093"/>
<rect x="324" y="432" width="3" height="23" fill="#db7093"/>
<rect x="332" y="432" width="3" height="23" fill="#db7093"/>
<rect x="341" y="431" width="1" height="5" fill="#db7093"/>
<rect x="349" y="431" width="1" height="5" fill="#db7093"/>
<rect x="357" y="431" width="1" height="5" fill="#db7093"/>
<rect x="365" y="431" width="1" height="5" fill="#db7093"/>
<rect x="373" y="431" width="1" height="5" fill="#db7093"/>
<rect x="380" y="422" width="3" height="9" fill="#32cd32"/>
<rect x="388" y="422" width="3" height="9" fill="#32cd32"/>
<rect x="396" y="422" width="3" height="9" fill="#32cd32"/>
<rect x="404" y="422" width="3" height="9" fill="#32cd32"/>
<rect x="412" y="422" width="3" height="9" fill="#32cd32"/>
<rect x="420" y="416" width="3" height="15" fill="#32cd32"/>
<rect x="428" y="416" width="3" height="15" fill="#32cd32"/>
<rect x="436" y="416" width="3" height="15" fill="#32cd32"/>
<rect x="444" y="416" width="3" height="15" fill="#32cd32"/>
<rect x="452" y="416" width="3" height="15" fill="#32cd32"/>
<rect x="460" y="404" width="3" height="27" fill="#32cd32"/>
<rect x="468" y="404" width="3" height="27" fill="#32cd32"/>
<rect x="476" y="404" width="3" height="27" fill="#32cd32"/>
<rect x="484" y="404" width="3" height="27" fill="#32cd32"/>
<rect x="492" y="404" width="3" height="27" fill="#32cd32"/>
<rect x="501" y="413" width="1" height="19" fill="#32cd32"/>
<rect x="509" y="413" width="1" height="19" fill="#32cd32"/>
<rect x="517" y="413" width="1" height="19" fill="#32cd32"/>
<rect x="525" y="413" width="1" height="19" fill="#32cd32"/>
<rect x="533" y="413" width="1" height="19" fill="#32cd32"/>
<rect x="541" y="420" width="1" height="12" fill="#32cd32"/>
<rect x="549" y="420" width="1" height="12" fill="#32cd32"/>
<rect x="557" y="420" width="1" height="12" fill="#32cd32"/>
<rect x="565" y="420" width="1" height="12" fill="#32cd32"/>
<rect x="573" y="420" width="1" height="12" fill="#32cd32"/>
<rect x="581" y="427" width="1" height="5" fill="#32cd32"/>
<rect x="589" y="427" width="1" height="5" fill="#32cd32"/>
<rect x="597" y="427" width="1" height="5" fill="#32cd32"/>
<rect x="605" y="427" width="1" height="5" fill="#32cd32"/>
<rect x="613" y="427" width="1" height="5" fill="#32cd32"/>
<rect x="620" y="432" width="3" height="6" fill="#db7093"/>
<rect x="628" y="432" width="3" height="6" fill="#db7093"/>
<rect x="636" y="432" width="3" height="6" fill="#db7093"/>
<rect x="644" y="432" width="3" height="6" fill="#db7093"/>
<rect x="652" y="432" width="3" height="6" fill="#db7093"/>
<rect x="660" y="432" width="3" height="20" fill="#db7093"/>
<rect x="668" y="432" width="3" height="20" fill="#db7093"/>
<rect x="676" y="432" width="3" height="20" fill="#db7093"/>
<rect x="684" y="432" width="3" height="20" fill="#db7093"/>
<rect x="692" y="432" width="3" height="20" fill="#db7093"/>
<rect x="701" y="431" width="1" height="7" fill="#db7093"/>
<rect x="709" y="431" width="1" height="7" fill="#db7093"/>
<rect x="717" y="431" width="1" height="7" fill="#db7093"/>
<rect x="725" y="431" width="1" height="7" fill="#db7093"/>
<rect x="733" y="431" width="1" height="7" fill="#db7093"/>
<rect x="741" y="431" width="1" height="5" fill="#db7093"/>
<rect x="749" y="431" width="1" height="5" fill="#db7093"/>
<rect x="757" y="431" width="1" height="5" fill="#db7093"/>
<rect x="765" y="431" width="1" height="5" fill="#db7093"/>
<rect x="773" y="431" width="1" height="5" fill="#db7093"/>
<rect x="780" y="432" width="3" height="18" fill="#db7093"/>
<rect x="788" y="432" width="3" height="18" fill="#db7093"/>
<rect x="796" y="432" width="3" height="18" fill="#db7093"/>
<rect x="804" y="432" width="3" height="18" fill="#db7093"/>
<rect x="812" y="432" width="3" height="18" fill="#db7093"/>
<rect x="820" y="432" width="3" height="20" fill="#db7093"/>
<rect x="828" y="432" width="3" height="20" fill="#db7093"/>
<rect x="836" y="432" width="3" height="20" fill="#db7093"/>
<rect x="844" y="432" width="3" height="20" fill="#db7093"/>
<rect x="852" y="432" width="3" height="20" fill="#db7093"/>
<rect x="861" y="431" width="1" height="17" fill="#db7093"/>
<rect x="869" y="431" width="1" height="17" fill="#db7093"/>
<rect x="877" y="431" width="1" height="17" fill="#db7093"/>
<rect x="885" y="431" width="1" height="17" fill="#db7093"/>
<rect x="893" y="431" width="1" height="17" fill="#db7093"/>
<rect x="901" y="431" width="1" height="12" fill="#db7093"/>
<rect x="909" y="431" width="1" height="12" fill="#db7093"/>
<rect x="917" y="431" width="1" height="12" fill="#db7093"/>
<rect x="925" y="431" width="1" height="12" fill="#db7093"/>
<rect x="933" y="431" width="1" height="12" fill="#db7093"/>
<rect x="940" y="428" width="3" height="3" fill="#32cd32"/>
<rect x="948" y="428" width="3" height="3" fill="#32cd32"/>
<polyline points="5.0,435.3 13.0,435.3 21.0,429.8 29.0,429.8 37.0,429.8 45.0,429.8 53.0,429.8 61.0,437.2 69.0,437.2 77.0,437.2 85.0,437.2 93.0,437.2 101.0,431.6 109.0,431.6 117.0,431.6 125.0,431.6 133.0,431.6 141.0,443.9 149.0,443.9 157.0,443.9 165.0,443.9 173.0,443.9 181.0,450.4 189.0,450.4 197.0,450.4 205.0,450.4 213.0,450.4 221.0,452.2 229.0,452.2 237.0,452.2 245.0,452.2 253.0,452.2 261.0,454.4 269.0,454.4 277.0,454.4 285.0,454.4 293.0,454.4 301.0,454.4 309.0,454.4 317.0,454.4 325.0,454.4 333.0,454.4 341.0,435.4 349.0,435.4 357.0,435.4 365.0,435.4 373.0,435.4 381.0,422.7 389.0,422.7 397.0,422.7 405.0,422.7 413.0,422.7 421.0,416.5 429.0,416.5 437.0,416.5 445.0,416.5 453.0,416.5 461.0,404.2 469.0,404.2 477.0,404.2 485.0,404.2 493.0,404.2 501.0,413.4 509.0,413.4 517.0,413.4 525.0,413.4 533.0,413.4 541.0,420.5 549.0,420.5 557.0,420.5 565.0,420.5 573.0,420.5 581.0,427.2 589.0,427.2 597.0,427.2 605.0,427.2 613.0,427.2 621.0,437.2 629.0,437.2 637.0,437.2 645.0,437.2 653.0,437.2 661.0,451.7 669.0,451.7 677.0,451.7 685.0,451.7 693.0,451.7 701.0,437.9 709.0,437.9 717.0,437.9 725.0,437.9 733.0,437.9 741.0,435.4 749.0,435.4 757.0,435.4 765.0,435.4 773.0,435.4 781.0,449.5 789.0,449.5 797.0,449.5 805.0,449.5 813.0,449.5 821.0,451.0 829.0,451.0 837.0,451.0 845.0,451.0 853.0,451.0 861.0,447.3 869.0,447.3 877.0,447.3 885.0,447.3 893.0,447.3 901.0,442.4 909.0,442.4 917.0,442.4 925.0,442.4 933.0,442.4 941.0,428.8 949.0,428.8" stroke="#ff00ff" stroke-width="1" fill="none" stroke-linejoin="round"/>
<g stroke="#00ffff" stroke-width="1" fill="none"><polyline id="l4" points="5.0,447.1 13.0,447.1 21.0,419.0 29.0,419.0 37.0,419.0 45.0,419.0 53.0,419.0 61.0,448.7 69.0,448.7 77.0,448.7 85.0,448.7 93.0,448.7 101.0,429.0 109.0,429.0 117.0,429.0 125.0,429.0 133.0,429.0 141.0,469.5 149.0,469.5 157.0,469.5 165.0,469.5 173.0,469.5 181.0,481.8 189.0,481.8 197.0,481.8 205.0,481.8 213.0,481.8 221.0,490.0 229.0,490.0 237.0,490.0 245.0,490.0 253.0,490.0 261.0,505.6 269.0,505.6 277.0,505.6 285.0,505.6 293.0,505.6 301.0,515.9 309.0,515.9 317.0,515.9 325.0,515.9 333.0,515.9 341.0,470.0 349.0,470.0 357.0,470.0 365.0,470.0 373.0,470.0 381.0,450.8 389.0,450.8 397.0,450.8 405.0,450.8 413.0,450.8 421.0,441.7 429.0,441.7 437.0,441.7 445.0,441.7 453.0,441.7 461.0,404.6 469.0,404.6 477.0,404.6 485.0,404.6 493.0,404.6 501.0,430.0 509.0,430.0 517.0,430.0 525.0,430.0 533.0,430.0 541.0,431.0 549.0,431.0 557.0,431.0 565.0,431.0 573.0,431.0 581.0,441.2 589.0,441.2 597.0,441.2 605.0,441.2 613.0,441.2 621.0,460.6 629.0,460.6 637.0,460.6 645.0,460.6 653.0,460.6 661.0,500.3 669.0,500.3 677.0,500.3 685.0,500.3 693.0,500.3 701.0,453.9 709.0,453.9 717.0,453.9 725.0,453.9 733.0,453.9 741.0,461.1 749.0,461.1 757.0,461.1 765.0,461.1 773.0,461.1 781.0,505.6 789.0,505.6 797.0,505.6 805.0,505.6 813.0,505.6 821.0,507.6 829.0,507.6 837.0,507.6 845.0,507.6 853.0,507.6 861.0,505.6 869.0,505.6 877.0,505.6 885.0,505.6 893.0,505.6 901.0,501.9 909.0,501.9 917.0,501.9 925.0,501.9 933.0,501.9 941.0,467.8 949.0,467.8" transform="translate(-0.5 -0.5)"/><use href="#l4" x="1" y="0"/><use href="#l4" x="0" y="1"/><use href="#l4" x="1" y="1"/></g>
<g stroke="#008000" stroke-width="1" fill="none"><polyline id="l5" points="5.0,433.7 13.0,433.7 21.0,425.9 29.0,425.9 37.0,425.9 45.0,425.9 53.0,425.9 61.0,438.0 69.0,438.0 77.0,438.0 85.0,438.0 93.0,438.0 101.0,433.9 109.0,433.9 117.0,433.9 125.0,433.9 133.0,433.9 141.0,451.7 149.0,451.7 157.0,451.7 165.0,451.7 173.0,451.7 181.0,466.9 189.0,466.9 197.0,466.9 205.0,466.9 213.0,466.9 221.0,478.9 229.0,478.9 237.0,478.9 245.0,478.9 253.0,478.9 261.0,491.8 269.0,491.8 277.0,491.8 285.0,491.8 293.0,491.8 301.0,504.1 309.0,504.1 317.0,504.1 325.0,504.1 333.0,504.1 341.0,486.9 349.0,486.9 357.0,486.9 365.0,486.9 373.0,486.9 381.0,468.9 389.0,468.9 397.0,468.9 405.0,468.9 413.0,468.9 421.0,455.0 429.0,455.0 437.0,455.0 445.0,455.0 453.0,455.0 461.0,430.0 469.0,430.0 477.0,430.0 485.0,430.0 493.0,430.0 501.0,430.0 509.0,430.0 517.0,430.0 525.0,430.0 533.0,430.0 541.0,430.0 549.0,430.0 557.0,430.0 565.0,430.0 573.0,430.0 581.0,436.1 589.0,436.1 597.0,436.1 605.0,436.1 613.0,436.1 621.0,447.7 629.0,447.7 637.0,447.7 645.0,447.7 653.0,447.7 661.0,474.4 669.0,474.4 677.0,474.4 685.0,474.4 693.0,474.4 701.0,463.5 709.0,463.5 717.0,463.5 725.0,463.5 733.0,463.5 741.0,462.9 749.0,462.9 757.0,462.9 765.0,462.9 773.0,462.9 781.0,484.7 789.0,484.7 797.0,484.7 805.0,484.7 813.0,484.7 821.0,495.6 829.0,495.6 837.0,495.6 845.0,495.6 853.0,495.6 861.0,500.7 869.0,500.7 877.0,500.7 885.0,500.7 893.0,500.7 901.0,500.7 909.0,500.7 917.0,500.7 925.0,500.7 933.0,500.7 941.0,485.1 949.0,485.1" transform="translate(-0.5 -0.5)"/><use href="#l5" x="1" y="0"/><use href="#l5" x="0" y="1"/><use href="#l5" x="1" y="1"/></g>
<g stroke="#ff0000" stroke-width="1" fill="none"><polyline id="l6" points="5.0,430.3 13.0,430.3 21.0,429.3 29.0,429.3 37.0,429.3 45.0,429.3 53.0,429.3 61.0,431.8 69.0,431.8 77.0,431.8 85.0,431.8 93.0,431.8 101.0,431.8 109.0,431.8 117.0,431.8 125.0,431.8 133.0,431.8 141.0,438.3 149.0,438.3 157.0,438.3 165.0,438.3 173.0,438.3 181.0,448.4 189.0,448.4 197.0,448.4 205.0,448.4 213.0,448.4 221.0,457.7 229.0,457.7 237.0,457.7 245.0,457.7 253.0,457.7 261.0,469.5 269.0,469.5 277.0,469.5 285.0,469.5 293.0,469.5 301.0,480.7 309.0,480.7 317.0,480.7 325.0,480.7 333.0,480.7 341.0,482.5 349.0,482.5 357.0,482.5 365.0,482.5 373.0,482.5 381.0,478.0 389.0,478.0 397.0,478.0 405.0,478.0 413.0,478.0 421.0,471.2 429.0,471.2 437.0,471.2 445.0,471.2 453.0,471.2 461.0,456.6 469.0,456.6 477.0,456.6 485.0,456.6 493.0,456.6 501.0,447.7 509.0,447.7 517.0,447.7 525.0,447.7 533.0,447.7 541.0,441.7 549.0,441.7 557.0,441.7 565.0,441.7 573.0,441.7 581.0,440.1 589.0,440.1 597.0,440.1 605.0,440.1 613.0,440.1 621.0,442.8 629.0,442.8 637.0,442.8 645.0,442.8 653.0,442.8 661.0,452.8 669.0,452.8 677.0,452.8 685.0,452.8 693.0,452.8 701.0,456.2 709.0,456.2 717.0,456.2 725.0,456.2 733.0,456.2 741.0,459.5 749.0,459.5 757.0,459.5 765.0,459.5 773.0,459.5 781.0,466.9 789.0,466.9 797.0,466.9 805.0,466.9 813.0,466.9 821.0,476.7 829.0,476.7 837.0,476.7 845.0,476.7 853.0,476.7 861.0,484.7 869.0,484.7 877.0,484.7 885.0,484.7 893.0,484.7 901.0,490.0 909.0,490.0 917.0,490.0 925.0,490.0 933.0,490.0 941.0,488.5 949.0,488.5" transform="translate(-0.5 -0.5)"/><use href="#l6" x="1" y="0"/><use href="#l6" x="0" y="1"/><use href="#l6" x="1" y="1"/></g>
<path d="M5 431.5H979" stroke="#58722e" stroke-width="1" stroke-dasharray="3 3" stroke-dashoffset="5" fill="none"/>
<path d="M5 493.5H979" stroke="#58722e" stroke-width="1" stroke-dasharray="3 3" stroke-dashoffset="5" fill="none"/>
</g>
<text y="410" font-size="10" fill="#fff"><tspan x="8.8" textLength="14.0" lengthAdjust="spacingAndGlyphs">M5</tspan> <tspan x="24.9" textLength="53.8" lengthAdjust="spacingAndGlyphs">RSI_2SigMA</tspan> <tspan x="81.6" textLength="26.2" lengthAdjust="spacingAndGlyphs">(7,3,5)</tspan> <tspan x="112.2" textLength="28.4" lengthAdjust="spacingAndGlyphs">1.2086</tspan> <tspan x="143.3" textLength="28.1" lengthAdjust="spacingAndGlyphs">1.2086</tspan> <tspan x="173.9" textLength="36.3" lengthAdjust="spacingAndGlyphs">-11.9154</tspan> <tspan x="213.1" textLength="35.8" lengthAdjust="spacingAndGlyphs">-17.2332</tspan> <tspan x="252.2" textLength="35.8" lengthAdjust="spacingAndGlyphs">-18.4418</tspan></text>
<text x="983" y="408" font-size="10" fill="#fff" textLength="23" lengthAdjust="spacingAndGlyphs">10.59</text>
<text x="982" y="434" font-size="10" fill="#fff" textLength="5" lengthAdjust="spacingAndGlyphs">0</text>
<text x="982.6" y="434" font-size="10" fill="#fff" textLength="18" lengthAdjust="spacingAndGlyphs">0.00</text>
<text x="983" y="496" font-size="10" fill="#fff" textLength="13" lengthAdjust="spacingAndGlyphs">-20</text>
<text x="983" y="519" font-size="10" fill="#fff" textLength="26" lengthAdjust="spacingAndGlyphs">-29.03</text>
<rect x="980" y="431" width="1" height="1" fill="#fff"/>
<rect x="5" y="523" width="1" height="3" fill="#fff"/>
<text y="535" font-size="10" fill="#fff"><tspan x="4.8" textLength="9.8" lengthAdjust="spacingAndGlyphs">10</tspan> <tspan x="17.2" textLength="14.8" lengthAdjust="spacingAndGlyphs">Mar</tspan> <tspan x="35.4" textLength="20.9" lengthAdjust="spacingAndGlyphs">2015</tspan></text>
<rect x="69" y="523" width="1" height="3" fill="#fff"/>
<text y="535" font-size="10" fill="#fff"><tspan x="68.6" textLength="9.5" lengthAdjust="spacingAndGlyphs">10</tspan> <tspan x="80.9" textLength="14.9" lengthAdjust="spacingAndGlyphs">Mar</tspan> <tspan x="99.2" textLength="24.2" lengthAdjust="spacingAndGlyphs">20:16</tspan></text>
<rect x="133" y="523" width="1" height="3" fill="#fff"/>
<text y="535" font-size="10" fill="#fff"><tspan x="132.6" textLength="9.5" lengthAdjust="spacingAndGlyphs">10</tspan> <tspan x="144.9" textLength="14.9" lengthAdjust="spacingAndGlyphs">Mar</tspan> <tspan x="163.2" textLength="24.2" lengthAdjust="spacingAndGlyphs">20:24</tspan></text>
<rect x="197" y="523" width="1" height="3" fill="#fff"/>
<text y="535" font-size="10" fill="#fff"><tspan x="196.6" textLength="9.5" lengthAdjust="spacingAndGlyphs">10</tspan> <tspan x="208.9" textLength="14.9" lengthAdjust="spacingAndGlyphs">Mar</tspan> <tspan x="227.2" textLength="24.2" lengthAdjust="spacingAndGlyphs">20:32</tspan></text>
<rect x="261" y="523" width="1" height="3" fill="#fff"/>
<text y="535" font-size="10" fill="#fff"><tspan x="260.6" textLength="9.5" lengthAdjust="spacingAndGlyphs">10</tspan> <tspan x="272.9" textLength="14.9" lengthAdjust="spacingAndGlyphs">Mar</tspan> <tspan x="291.2" textLength="24.2" lengthAdjust="spacingAndGlyphs">20:40</tspan></text>
<rect x="325" y="523" width="1" height="3" fill="#fff"/>
<text y="535" font-size="10" fill="#fff"><tspan x="324.6" textLength="9.5" lengthAdjust="spacingAndGlyphs">10</tspan> <tspan x="336.9" textLength="14.9" lengthAdjust="spacingAndGlyphs">Mar</tspan> <tspan x="355.2" textLength="24.2" lengthAdjust="spacingAndGlyphs">20:48</tspan></text>
<rect x="389" y="523" width="1" height="3" fill="#fff"/>
<text y="535" font-size="10" fill="#fff"><tspan x="388.6" textLength="9.5" lengthAdjust="spacingAndGlyphs">10</tspan> <tspan x="400.9" textLength="14.9" lengthAdjust="spacingAndGlyphs">Mar</tspan> <tspan x="419.2" textLength="24.2" lengthAdjust="spacingAndGlyphs">20:56</tspan></text>
<rect x="453" y="523" width="1" height="3" fill="#fff"/>
<text y="535" font-size="10" fill="#fff"><tspan x="452.6" textLength="9.5" lengthAdjust="spacingAndGlyphs">10</tspan> <tspan x="464.9" textLength="14.9" lengthAdjust="spacingAndGlyphs">Mar</tspan> <tspan x="483.2" textLength="24.2" lengthAdjust="spacingAndGlyphs">21:04</tspan></text>
<rect x="517" y="523" width="1" height="3" fill="#fff"/>
<text y="535" font-size="10" fill="#fff"><tspan x="516.6" textLength="9.5" lengthAdjust="spacingAndGlyphs">10</tspan> <tspan x="528.9" textLength="14.9" lengthAdjust="spacingAndGlyphs">Mar</tspan> <tspan x="547.2" textLength="24.2" lengthAdjust="spacingAndGlyphs">21:12</tspan></text>
<rect x="581" y="523" width="1" height="3" fill="#fff"/>
<text y="535" font-size="10" fill="#fff"><tspan x="580.6" textLength="9.5" lengthAdjust="spacingAndGlyphs">10</tspan> <tspan x="592.9" textLength="14.9" lengthAdjust="spacingAndGlyphs">Mar</tspan> <tspan x="611.2" textLength="24.2" lengthAdjust="spacingAndGlyphs">21:20</tspan></text>
<rect x="645" y="523" width="1" height="3" fill="#fff"/>
<text y="535" font-size="10" fill="#fff"><tspan x="644.6" textLength="9.5" lengthAdjust="spacingAndGlyphs">10</tspan> <tspan x="656.9" textLength="14.9" lengthAdjust="spacingAndGlyphs">Mar</tspan> <tspan x="675.2" textLength="24.2" lengthAdjust="spacingAndGlyphs">21:28</tspan></text>
<rect x="709" y="523" width="1" height="3" fill="#fff"/>
<text y="535" font-size="10" fill="#fff"><tspan x="708.6" textLength="9.5" lengthAdjust="spacingAndGlyphs">10</tspan> <tspan x="720.9" textLength="14.9" lengthAdjust="spacingAndGlyphs">Mar</tspan> <tspan x="739.2" textLength="24.2" lengthAdjust="spacingAndGlyphs">21:36</tspan></text>
<rect x="773" y="523" width="1" height="3" fill="#fff"/>
<text y="535" font-size="10" fill="#fff"><tspan x="772.6" textLength="9.5" lengthAdjust="spacingAndGlyphs">10</tspan> <tspan x="784.9" textLength="14.9" lengthAdjust="spacingAndGlyphs">Mar</tspan> <tspan x="803.2" textLength="24.2" lengthAdjust="spacingAndGlyphs">21:44</tspan></text>
<rect x="837" y="523" width="1" height="3" fill="#fff"/>
<text y="535" font-size="10" fill="#fff"><tspan x="836.6" textLength="9.5" lengthAdjust="spacingAndGlyphs">10</tspan> <tspan x="848.9" textLength="14.9" lengthAdjust="spacingAndGlyphs">Mar</tspan> <tspan x="867.2" textLength="24.2" lengthAdjust="spacingAndGlyphs">21:52</tspan></text>
<rect x="901" y="523" width="1" height="3" fill="#fff"/>
<text y="535" font-size="10" fill="#fff"><tspan x="900.6" textLength="9.5" lengthAdjust="spacingAndGlyphs">10</tspan> <tspan x="912.9" textLength="14.9" lengthAdjust="spacingAndGlyphs">Mar</tspan> <tspan x="931.2" textLength="24.2" lengthAdjust="spacingAndGlyphs">22:00</tspan></text>
<defs><linearGradient id="tg" x1="0" y1="0" x2="0" y2="1"><stop offset="0" stop-color="#ffffff"/><stop offset="1" stop-color="#e4e5f0"/></linearGradient></defs>
<rect x="409.5" y="350.5" width="135" height="49" rx="3" ry="3" fill="url(#tg)" stroke="#767676"/>
<text x="415.5" y="364" font-size="12" fill="#575757" textLength="121" lengthAdjust="spacingAndGlyphs">M1 RSI_2SigMA (14,3,5)</text>
<text x="415.5" y="379" font-size="12" fill="#575757" textLength="116" lengthAdjust="spacingAndGlyphs">Time: 2015.03.10 20:58</text>
<text x="415.5" y="393.5" font-size="12" fill="#575757" textLength="77" lengthAdjust="spacingAndGlyphs">Value8: -2.8551</text>
<rect x="0" y="540" width="1006" height="2" fill="#fff"/>
<rect x="0" y="542" width="1006" height="1" fill="#000"/>
<rect x="0" y="543" width="1006" height="1" fill="#fff"/>
<rect x="0" y="544" width="1006" height="18" fill="#f0f0f0"/>
<rect x="0" y="562" width="1006" height="1" fill="#fcfcfc"/>
<rect x="0" y="563" width="1006" height="20" fill="#f0f0f0"/>
<rect x="0" y="543" width="1" height="19" fill="#a0a0a0"/>
<rect x="1" y="543" width="1" height="18" fill="#696969"/>
<rect x="2" y="543" width="1" height="18" fill="#fff"/>
<rect x="83" y="543" width="1" height="17" fill="#fff"/>
<rect x="84" y="542" width="76" height="19" fill="#000"/>
<rect x="85" y="540" width="74" height="20" fill="#fff"/>
<text x="13.8" y="555" font-size="11" fill="#6d6d6d" textLength="59" lengthAdjust="spacingAndGlyphs">EURUSD,M1</text>
<text x="93.1" y="555" font-size="11" fill="#000" textLength="56" lengthAdjust="spacingAndGlyphs">EURJPY,M1</text>
<path d="M999.5 548.8V555.6L996 552.2Z" fill="#808080"/>
<path d="M4.5 569L9.5 574M9.5 569L4.5 574" stroke="#000" stroke-width="1.6" fill="none"/>
<defs><linearGradient id="sg" x1="0" y1="0" x2="0" y2="1"><stop offset="0" stop-color="#f6f6f6"/><stop offset="0.45" stop-color="#ececec"/><stop offset="0.5" stop-color="#dcdcdc"/><stop offset="1" stop-color="#d0d0d0"/></linearGradient></defs>
<rect x="15" y="566" width="991" height="17" fill="#e8e8e8"/>
<rect x="15" y="566" width="991" height="1" fill="#a3a3a3"/>
<rect x="15" y="566" width="1" height="17" fill="#a3a3a3"/>
<rect x="16" y="567" width="990" height="3" fill="#fdfdfd"/>
<rect x="16" y="570" width="26" height="13" fill="#e9e9e9"/>
<rect x="42.5" y="570.5" width="927" height="14" fill="url(#sg)" stroke="#9a9a9a"/>
<rect x="970" y="570" width="36" height="13" fill="#f3f3f3"/>
<path d="M30 577V584H23.2Z" fill="#383838"/>
<rect x="501" y="577" width="10" height="6" fill="#f4f4f4"/>
<rect x="502" y="578" width="1" height="5" fill="#303030"/>
<rect x="503" y="578" width="1" height="5" fill="#8a8a8a"/>
<rect x="505" y="578" width="1" height="5" fill="#303030"/>
<rect x="506" y="578" width="1" height="5" fill="#8a8a8a"/>
<rect x="508" y="578" width="1" height="5" fill="#303030"/>
<rect x="509" y="578" width="1" height="5" fill="#8a8a8a"/>
<rect x="1005" y="577" width="1" height="6" fill="#101010"/>
<rect x="1" y="580" width="13" height="3" fill="#d6e4f7"/>
<rect x="6" y="581" width="2" height="2" fill="#a79fd0"/>
</svg>
</body></html>
